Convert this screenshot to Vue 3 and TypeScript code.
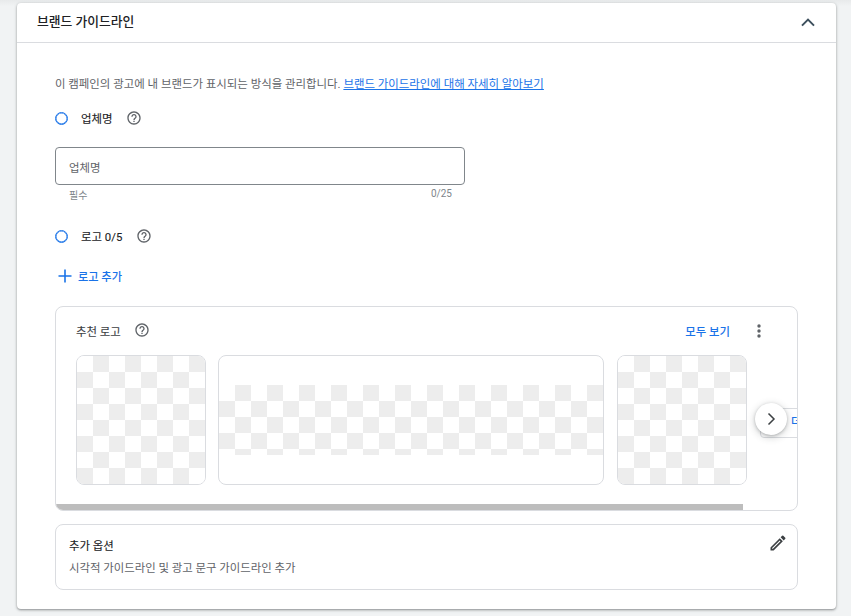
<script setup lang="ts">
const tiles: { id: number; wide: boolean }[] = [
  { id: 1, wide: false },
  { id: 2, wide: true },
  { id: 3, wide: false },
];
</script>

<template>
  <div class="page">
    <section class="card">
      <header class="card-head">
        <h2 class="title">브랜드 가이드라인</h2>
        <svg class="chev" width="24" height="24" viewBox="0 0 24 24">
          <path d="M6 15.6 12 9.6l6 6" fill="none" stroke="#3c4f5c" stroke-width="2" />
        </svg>
      </header>
      <div class="card-body">
        <p class="intro">
          이 캠페인의 광고에 내 브랜드가 표시되는 방식을 관리합니다.
          <a class="link">브랜드 가이드라인에 대해 자세히 알아보기</a>
        </p>

        <div class="radio-row first">
          <span class="radio"></span>
          <span class="radio-label">업체명</span>
          <svg class="help" width="16" height="16" viewBox="0 0 24 24">
            <path fill="#5f6368" d="M11 18h2v-2h-2v2zm1-16C6.48 2 2 6.48 2 12s4.48 10 10 10 10-4.48 10-10S17.52 2 12 2zm0 18c-4.41 0-8-3.59-8-8s3.59-8 8-8 8 3.59 8 8-3.59 8-8 8zm0-14c-2.21 0-4 1.79-4 4h2c0-1.1.9-2 2-2s2 .9 2 2c0 2-3 1.75-3 5h2c0-2.25 3-2.5 3-5 0-2.21-1.79-4-4-4z" />
          </svg>
        </div>

        <div class="field">
          <span class="placeholder">업체명</span>
        </div>
        <div class="field-meta">
          <span class="required">필수</span>
          <span class="count">0/25</span>
        </div>

        <div class="radio-row second">
          <span class="radio"></span>
          <span class="radio-label">로고 0/5</span>
          <svg class="help" width="16" height="16" viewBox="0 0 24 24">
            <path fill="#5f6368" d="M11 18h2v-2h-2v2zm1-16C6.48 2 2 6.48 2 12s4.48 10 10 10 10-4.48 10-10S17.52 2 12 2zm0 18c-4.41 0-8-3.59-8-8s3.59-8 8-8 8 3.59 8 8-3.59 8-8 8zm0-14c-2.21 0-4 1.79-4 4h2c0-1.1.9-2 2-2s2 .9 2 2c0 2-3 1.75-3 5h2c0-2.25 3-2.5 3-5 0-2.21-1.79-4-4-4z" />
          </svg>
        </div>

        <div class="add-logo">
          <svg width="20" height="20" viewBox="0 0 20 20">
            <path d="M10 3.5v13M3.5 10h13" stroke="#1a73e8" stroke-width="1.6" fill="none" />
          </svg>
          <span>로고 추가</span>
        </div>

        <div class="panel">
          <div class="panel-head">
            <span class="panel-title">추천 로고</span>
            <svg class="help panel-help" width="16" height="16" viewBox="0 0 24 24">
              <path fill="#5f6368" d="M11 18h2v-2h-2v2zm1-16C6.48 2 2 6.48 2 12s4.48 10 10 10 10-4.48 10-10S17.52 2 12 2zm0 18c-4.41 0-8-3.59-8-8s3.59-8 8-8 8 3.59 8 8-3.59 8-8 8zm0-14c-2.21 0-4 1.79-4 4h2c0-1.1.9-2 2-2s2 .9 2 2c0 2-3 1.75-3 5h2c0-2.25 3-2.5 3-5 0-2.21-1.79-4-4-4z" />
            </svg>
            <span class="view-all">모두 보기</span>
            <svg class="more" width="20" height="20" viewBox="0 0 20 20">
              <circle cx="10" cy="5" r="1.7" fill="#5f6368" />
              <circle cx="10" cy="10" r="1.7" fill="#5f6368" />
              <circle cx="10" cy="15" r="1.7" fill="#5f6368" />
            </svg>
          </div>
          <div class="carousel">
            <div v-for="t in tiles" :key="t.id" class="tile" :class="{ wide: t.wide }">
              <div class="checker"></div>
            </div>
            <div class="peek">더보기</div>
          </div>
          <button class="next" type="button" aria-label="다음">
            <svg width="20" height="20" viewBox="0 0 20 20">
              <path d="M7.5 4.5 13 10l-5.5 5.5" fill="none" stroke="#3c4043" stroke-width="1.5" />
            </svg>
          </button>
          <div class="scrollbar"><div class="thumb"></div></div>
        </div>

        <div class="options">
          <div>
            <div class="options-title">추가 옵션</div>
            <div class="options-sub">시각적 가이드라인 및 광고 문구 가이드라인 추가</div>
          </div>
          <svg class="pencil" width="20" height="20" viewBox="0 0 24 24">
            <path fill="#3c4043" d="M3 17.25V21h3.75L17.81 9.94l-3.75-3.75L3 17.25zM5.92 19H5v-.92l9.06-9.06.92.92L5.92 19zM20.71 7.04a1 1 0 0 0 0-1.41l-2.34-2.34a1 1 0 0 0-1.41 0l-1.83 1.83 3.75 3.75 1.83-1.83z" />
          </svg>
        </div>
      </div>
    </section>
  </div>
</template>

<style>
html,
body {
  margin: 0;
  background: #f1f3f4;
}
</style>

<style scoped>
.page {
  width: 851px;
  height: 616px;
  box-sizing: border-box;
  padding: 3px 15px 0 17px;
  overflow: hidden;
  background: linear-gradient(#e8eaeb, #f1f3f4 6px);
  font-family: Roboto, "Noto Sans CJK KR", sans-serif;
  color: #202124;
}
.card {
  height: 606px;
  background: #fff;
  border-radius: 4px;
  box-shadow: 0 1px 2px rgba(60, 64, 67, 0.45), 0 1px 3px 1px rgba(60, 64, 67, 0.12);
}
.card-head {
  height: 39px;
  display: flex;
  align-items: center;
  justify-content: space-between;
  padding: 0 16px 0 20px;
  border-bottom: 1px solid #dadce0;
}
.title {
  margin: -4px 0 0;
  font-size: 12.8px;
  font-weight: 500;
  color: #202124;
}
.chev {
  margin-top: -1px;
}
.card-body {
  padding: 33px 38px 0;
}
.intro {
  margin: 0;
  font-size: 11.43px;
  line-height: 16px;
  color: #5f6368;
  white-space: nowrap;
}
.link {
  color: #1a73e8;
  text-decoration: underline;
}
.radio-row {
  display: flex;
  align-items: center;
  height: 20px;
}
.radio-row.first {
  margin-top: 16px;
}
.radio-row.second {
  margin-top: 25px;
}
.radio {
  width: 11px;
  height: 11px;
  border: 1px solid #1a73e8;
  border-radius: 50%;
  box-shadow: inset 0 0 0 0.5px #1a73e8;
}
.radio-label {
  margin-left: 13px;
  font-size: 11.4px;
  font-weight: 400;
  color: #202124;
  -webkit-text-stroke: 0.12px #202124;
}
.help {
  margin-left: 14px;
}
.field {
  box-sizing: border-box;
  width: 410px;
  height: 38px;
  margin-top: 19px;
  border: 1px solid #80868b;
  border-radius: 4px;
  display: flex;
  align-items: center;
  padding: 2px 0 0 13px;
}
.placeholder {
  font-size: 11.4px;
  color: #5f6368;
}
.field-meta {
  width: 410px;
  box-sizing: border-box;
  display: flex;
  justify-content: space-between;
  padding: 4px 13px 0 14px;
  margin-bottom: -1px;
  font-size: 10px;
  line-height: 13px;
  color: #80868b;
}
.count {
  margin-top: -2px;
}
.add-logo {
  display: flex;
  align-items: center;
  gap: 3px;
  height: 20px;
  margin-top: 20px;
  font-size: 11.2px;
  font-weight: 500;
  color: #1a73e8;
}
.panel {
  position: relative;
  box-sizing: border-box;
  height: 205px;
  margin-top: 20px;
  border: 1px solid #dadce0;
  border-radius: 8px;
  overflow: hidden;
}
.panel-head {
  display: flex;
  align-items: center;
  height: 48px;
  padding: 0 28px 0 20px;
}
.panel-title {
  font-size: 11.4px;
  font-weight: 400;
  -webkit-text-stroke: 0.12px #3c4043;
  color: #3c4043;
  margin-top: -1px;
}
.panel-help {
  margin-top: -2px;
  margin-left: 13px;
}
.view-all {
  margin-left: auto;
  margin-right: 19px;
  font-size: 11.4px;
  font-weight: 500;
  color: #1a73e8;
}
.carousel {
  display: flex;
  align-items: flex-start;
  padding-left: 20px;
  overflow: hidden;
}
.tile {
  flex: 0 0 130px;
  height: 130px;
  margin-right: 12px;
  box-sizing: border-box;
  border: 1px solid #dadce0;
  border-radius: 8px;
  overflow: hidden;
  display: flex;
  align-items: center;
}
.tile.wide {
  flex-basis: 386px;
  margin-right: 13px;
}
.checker {
  width: 100%;
  height: 100%;
  background: repeating-conic-gradient(#ededed 0 25%, #fff 0 50%) 0 0 / 32px 32px;
}
.tile.wide .checker {
  height: 70px;
  margin-top: -1px;
}
.peek {
  flex: 0 0 auto;
  box-sizing: border-box;
  height: 30px;
  margin-top: 53px;
  padding: 0 0 0 30px;
  border: 1px solid #dadce0;
  border-radius: 4px;
  font-size: 11px;
  line-height: 28px;
  font-weight: 500;
  color: #1a73e8;
  white-space: nowrap;
  margin-left: 1px;
}
.next {
  position: absolute;
  left: 699px;
  top: 96px;
  width: 32px;
  height: 32px;
  padding: 0;
  border: 0;
  border-radius: 50%;
  background: #fff;
  box-shadow: 0 1px 3px rgba(60, 64, 67, 0.3), 0 2px 6px 2px rgba(60, 64, 67, 0.15);
  display: flex;
  align-items: center;
  justify-content: center;
}
.scrollbar {
  position: absolute;
  left: 0;
  right: 0;
  bottom: 0;
  height: 6px;
}
.thumb {
  width: 687px;
  height: 100%;
  background: #bdbdbd;
}
.options {
  box-sizing: border-box;
  height: 66px;
  margin-top: 13px;
  border: 1px solid #dadce0;
  border-radius: 8px;
  padding: 13px 9px 0 13px;
  display: flex;
  justify-content: space-between;
}
.options-title {
  font-size: 11.4px;
  line-height: 16px;
  font-weight: 400;
  -webkit-text-stroke: 0.12px #202124;
  color: #202124;
}
.options-sub {
  margin-top: 6px;
  font-size: 11.4px;
  line-height: 16px;
  color: #5f6368;
}
.pencil {
  margin-top: -5px;
}
</style>
